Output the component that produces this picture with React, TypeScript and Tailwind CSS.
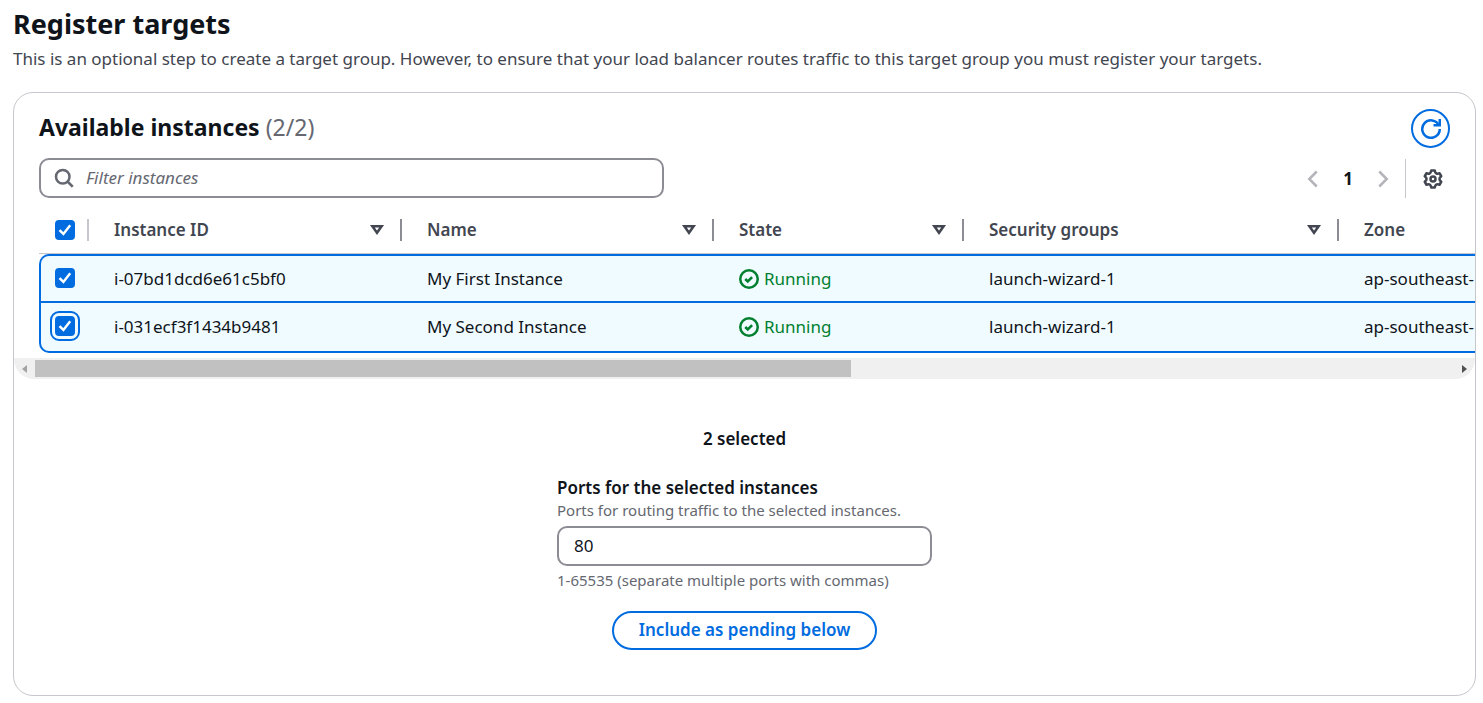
import React from "react";

const instances = [
  { id: "i-07bd1dcd6e61c5bf0", name: "My First Instance", state: "Running", groups: "launch-wizard-1", zone: "ap-southeast-" },
  { id: "i-031ecf3f1434b9481", name: "My Second Instance", state: "Running", groups: "launch-wizard-1", zone: "ap-southeast-" },
];

const columns = ["Instance ID", "Name", "State", "Security groups", "Zone"];

function Icon({ children, className = "" }: { children: React.ReactNode; className?: string }) {
  return (
    <svg
      viewBox="0 0 16 16"
      className={`size-5 shrink-0 fill-none stroke-current stroke-2 ${className}`}
      aria-hidden="true"
    >
      {children}
    </svg>
  );
}

function Checkbox({ label, focused = false }: { label: string; focused?: boolean }) {
  return (
    <span
      className={`grid size-5 place-items-center rounded ${
        focused ? "outline-2 outline-offset-[3px] outline-[#006ce0]" : ""
      }`}
    >
      <input
        type="checkbox"
        defaultChecked
        aria-label={label}
        className="peer col-start-1 row-start-1 size-5 appearance-none rounded border-2 border-[#8c8c94] bg-white outline-none checked:border-[#006ce0] checked:bg-[#006ce0]"
      />
      <svg
        viewBox="0 0 20 20"
        className="pointer-events-none invisible col-start-1 row-start-1 size-5 fill-none stroke-white stroke-[2.5] peer-checked:visible"
        aria-hidden="true"
      >
        <path d="M4.5 10.2 8.4 14 15.2 5.2" />
      </svg>
    </span>
  );
}

export default function App() {
  return (
    <main className="bg-white pt-2 pr-[7px] pb-[7px] pl-[13px] font-['Noto_Sans',sans-serif] text-[17px] leading-6 text-[#0f141a]">
      <h1 className="text-[27px] leading-8 font-bold">Register targets</h1>
      <p className="mt-[7px] text-[#424650]">
        This is an optional step to create a target group. However, to ensure that your load balancer routes traffic to
        this target group you must register your targets.
      </p>

      <section className="mt-[21px] rounded-[20px] border border-[#c6c6cd] pb-[45px]">
        <header className="flex items-start justify-between px-[25px] pt-4">
          <h2 className="text-[23px] leading-9 font-bold">
            Available instances <span className="font-normal text-[#656871]">(2/2)</span>
          </h2>
          <button
            type="button"
            aria-label="Refresh"
            className="grid size-[39px] place-items-center rounded-full border-2 border-[#006ce0] text-[#006ce0]"
          >
            <Icon>
              <path d="M10 5h5V0" />
              <path d="M15 8a7 7 0 1 1-.7-3" />
            </Icon>
          </button>
        </header>

        <div className="mt-[10px] flex items-end justify-between px-[25px]">
          <label className="flex h-10 w-[625px] items-center gap-3 rounded-[10px] border-2 border-[#8c8c94] px-[13px] text-[#656871]">
            <Icon>
              <circle cx="7" cy="7" r="5.4" />
              <path d="m11 11 4 4" />
            </Icon>
            <input
              type="search"
              aria-label="Filter instances"
              placeholder="Filter instances"
              className="min-w-0 flex-1 bg-transparent outline-none placeholder:text-[#656871] placeholder:italic"
            />
          </label>
          <div className="flex items-center">
            <button type="button" aria-label="Previous page" className="text-[#b4b4bb]">
              <Icon>
                <path d="M11 2 5 8l6 6" />
              </Icon>
            </button>
            <button type="button" aria-current="page" className="w-[50px] text-center font-bold">
              1
            </button>
            <button type="button" aria-label="Next page" className="text-[#b4b4bb]">
              <Icon>
                <path d="m5 2 6 6-6 6" />
              </Icon>
            </button>
            <span className="ml-3 h-[39px] w-px bg-[#c6c6cd]" />
            <button type="button" aria-label="Preferences" className="mr-[7px] ml-[17px] text-[#424650]">
              <Icon className="[stroke-linejoin:round]">
                <path d="M6.6 1.2h2.8Q9.9 4.6 13.2 3.4l1.4 2.4Q11.7 8 14.6 10.2l-1.4 2.4Q9.9 11.4 9.4 14.8H6.6Q6.1 11.4 2.8 12.6l-1.4-2.4Q4.3 8 1.4 5.8l1.4-2.4Q6.1 4.6 6.6 1.2z" />
                <circle cx="8" cy="8" r="2" />
              </Icon>
            </button>
          </div>
        </div>

        <div className="mt-2 overflow-x-hidden pl-[25px]">
          <table className="w-full min-w-[1437px] table-fixed border-separate border-spacing-0 text-left">
            <colgroup>
              <col className="w-[50px]" />
              <col className="w-[313px]" />
              <col className="w-[312px]" />
              <col className="w-[250px]" />
              <col className="w-[375px]" />
              <col />
            </colgroup>
            <thead>
              <tr className="h-12 text-[#424650]">
                <th className="border-b border-[#c6c6cd] p-0 pl-4">
                  <div className="flex items-center justify-between">
                    <Checkbox label="Select all instances" />
                    <span className="h-[22px] w-0.5 bg-[#c6c6cd]" />
                  </div>
                </th>
                {columns.map((name, i) => (
                  <th key={name} scope="col" className="border-b border-[#c6c6cd] p-0 pl-[25px] font-semibold">
                    <div className="flex items-center justify-between">
                      {name}
                      {i < columns.length - 1 && (
                        <span className="flex items-center gap-[13px]">
                          <button type="button" aria-label={`Sort by ${name}`}>
                            <Icon>
                              <path d="M4.3 5h7.4L8 10.2z" />
                            </Icon>
                          </button>
                          <span className="h-[22px] w-0.5 bg-[#8c8c94]" />
                        </span>
                      )}
                    </div>
                  </th>
                ))}
              </tr>
            </thead>
            <tbody>
              {instances.map((item, i) => {
                const first = i === 0;
                const edge = first ? "border-y-2" : "border-b-2";
                const cell = `${edge} border-[#006ce0] bg-[#f0fbff] p-0 pl-[25px]`;
                return (
                  <tr key={item.id} className={first ? "h-[49px]" : "h-[50px]"}>
                    <td
                      className={`${edge} border-l-2 border-[#006ce0] bg-[#f0fbff] p-0 pb-0.5 pl-[14px] ${
                        first ? "rounded-tl-[10px]" : "rounded-bl-[10px]"
                      }`}
                    >
                      <Checkbox label={`Select ${item.name}`} focused={!first} />
                    </td>
                    <td className={cell}>{item.id}</td>
                    <td className={cell}>{item.name}</td>
                    <td className={cell}>
                      <span className="flex items-center gap-[5px] text-[#00802f]">
                        <Icon>
                          <circle cx="8" cy="8" r="7" />
                          <path d="m5 8 2 2 3.5-3.5" />
                        </Icon>
                        {item.state}
                      </span>
                    </td>
                    <td className={cell}>{item.groups}</td>
                    <td className={`${cell} whitespace-nowrap`}>{item.zone}</td>
                  </tr>
                );
              })}
            </tbody>
          </table>
        </div>

        <div className="mt-[5px] flex h-[21px] items-center rounded-b-[20px] bg-[#f0f0f0] px-2">
          <svg viewBox="0 0 5 8" className="h-2 w-[5px] fill-[#a3a3a3]" aria-hidden="true">
            <path d="M5 0v8L0 4z" />
          </svg>
          <div className="mx-2 flex-1">
            <div className="h-[17px] w-[57.5%] bg-[#c1c1c1]" />
          </div>
          <svg viewBox="0 0 5 8" className="h-2 w-[5px] fill-[#505050]" aria-hidden="true">
            <path d="M0 0v8l5-4z" />
          </svg>
        </div>

        <div className="mt-12 flex flex-col items-center">
          <p className="font-semibold">2 selected</p>
          <div className="mt-[25px] flex w-[375px] flex-col">
            <label htmlFor="ports" className="font-semibold">
              Ports for the selected instances
            </label>
            <p className="text-[15px] leading-5 text-[#656871]">Ports for routing traffic to the selected instances.</p>
            <input
              id="ports"
              type="text"
              defaultValue="80"
              className="mt-[6px] h-10 rounded-[10px] border-2 border-[#8c8c94] px-[15px] pb-0.5 outline-none"
            />
            <p className="mt-1 text-[15px] leading-5 text-[#656871]">1-65535 (separate multiple ports with commas)</p>
          </div>
          <button
            type="button"
            className="mt-[21px] h-[39px] rounded-full border-2 border-[#006ce0] px-[25px] pb-0.5 font-semibold text-[#006ce0]"
          >
            Include as pending below
          </button>
        </div>
      </section>
    </main>
  );
}
